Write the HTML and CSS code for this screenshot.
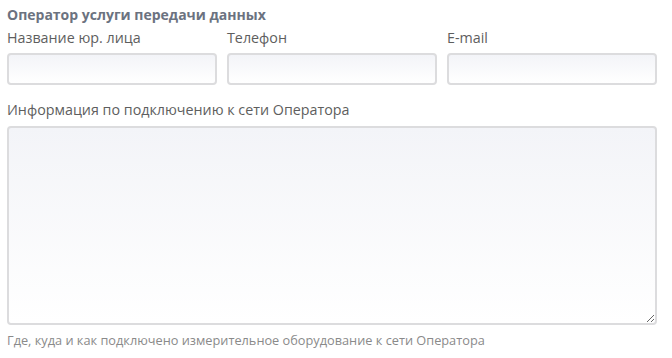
FILE: index.html
```html
<!DOCTYPE html>
<html lang="ru">
<head>
  <meta charset="UTF-8" />
  <title>Оператор услуги передачи данных</title>
  <link rel="stylesheet" href="styles.css">
</head>
<body>
  <div class="section">
    <h3 class="section-title">Оператор услуги передачи данных</h3>

    <div class="row">
      <div class="field">
        <label for="orgName">Название юр. лица</label>
        <input type="text" id="orgName" />
      </div>
      <div class="field">
        <label for="phone">Телефон</label>
        <input type="text" id="phone" />
      </div>
      <div class="field">
        <label for="email">E-mail</label>
        <input type="text" id="email" />
      </div>
    </div>

    <div class="field wide">
      <label for="connInfo">Информация по подключению к сети Оператора</label>
      <textarea id="connInfo"></textarea>
      <p class="hint">Где, куда и как подключено измерительное оборудование к сети Оператора</p>
    </div>
  </div>
</body>
</html>
```

FILE: styles.css
```css
body {
  margin: 0;
  padding: 0;
  font-family: 'Open Sans', sans-serif;
  color: #555;
  background: #fff;
}

.section {
  width: 650px;
  padding: 5px 7px 0;
}

.section-title {
  margin: 0;
  font-size: 14px;
  font-weight: 700;
  line-height: 20px;
  color: #6b7280;
}

.row {
  display: grid;
  grid-template-columns: 210px 210px 210px;
  column-gap: 10px;
}

label {
  display: block;
  font-size: 14.3px;
  line-height: 20px;
  margin: 3px 0 5px;
  color: #5e5e5e;
}

input, textarea {
  display: block;
  box-sizing: border-box;
  width: 100%;
  border: 2px solid #dcdcde;
  border-radius: 4px;
  background: linear-gradient(to bottom, #f3f4f8, #ffffff);
  font-family: inherit;
  font-size: 13px;
}

input {
  height: 32px;
}

.wide {
  margin-top: 15px;
}

.wide label {
  margin-bottom: 6px;
}

textarea {
  height: 199px;
  resize: vertical;
}

.hint {
  margin: 7px 0 0;
  font-size: 12.75px;
  line-height: 16px;
  color: #8a8a8a;
}
```
